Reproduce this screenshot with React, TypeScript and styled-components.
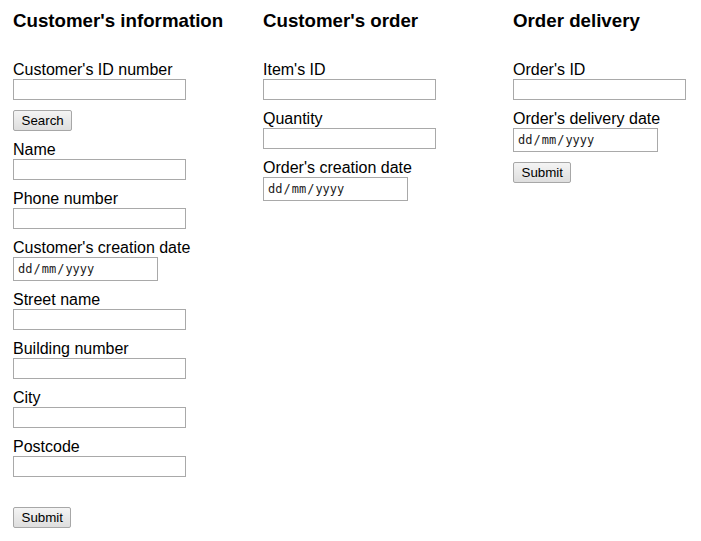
import React from "react";
import styled, { createGlobalStyle } from "styled-components";

const Global = createGlobalStyle`
  html, body { margin: 0; padding: 0; background: #fff; }
  body { font-family: "Liberation Sans", Arial, sans-serif; color: #000; }
`;

const Page = styled.div`
  display: grid;
  grid-template-columns: 250px 250px 1fr;
  align-items: start;
  padding: 10px 13px;
`;

const Column = styled.section`
  display: flex;
  flex-direction: column;
  align-items: flex-start;
  gap: 10px;
`;

const Heading = styled.h3`
  margin: 0 0 19px 0;
  font-size: 18.72px;
  font-weight: bold;
  line-height: 21.5px;
  white-space: nowrap;
`;

const Field = styled.div`
  display: flex;
  flex-direction: column;
  align-items: flex-start;
`;

const Label = styled.label`
  font-size: 16px;
  line-height: 18px;
  white-space: nowrap;
`;

const TextInput = styled.input`
  box-sizing: border-box;
  width: 173px;
  height: 21px;
  margin: 0;
  padding: 1px 2px;
  border: 1px solid #a9a9a9;
  background: #fff;
  font-family: "Liberation Sans", Arial, sans-serif;
  font-size: 13.33px;
`;

const DateBox = styled.div`
  box-sizing: border-box;
  width: 145px;
  height: 24px;
  border: 1px solid #a9a9a9;
  display: flex;
  align-items: center;
  padding-left: 4px;
  font-family: "DejaVu Sans Mono", "Liberation Mono", monospace;
  font-size: 12px;
  color: #1a1a1a;
  white-space: pre;
`;

const Sep = styled.span`
  margin: 0 1px;
`;

const Button = styled.button<{ $top?: number }>`
  box-sizing: border-box;
  height: 21px;
  margin: ${(p) => (p.$top ? `${p.$top}px` : "0")} 0 0 0;
  padding: 0 7.5px;
  border: 1px solid #a7a7a7;
  border-radius: 2px;
  background: linear-gradient(#f4f4f4, #dedede);
  font-family: "Liberation Sans", Arial, sans-serif;
  font-size: 13.33px;
  color: #000;
`;

const TextField = ({ label }: { label: string }) => (
  <Field>
    <Label>{label}</Label>
    <TextInput type="text" />
  </Field>
);

const DateField = ({ label }: { label: string }) => (
  <Field>
    <Label>{label}</Label>
    <DateBox>
      dd<Sep>/</Sep>mm<Sep>/</Sep>yyyy
    </DateBox>
  </Field>
);

export default function App() {
  return (
    <>
      <Global />
      <Page>
        <Column>
          <Heading>Customer's information</Heading>
          <TextField label="Customer's ID number" />
          <Button>Search</Button>
          <TextField label="Name" />
          <TextField label="Phone number" />
          <DateField label="Customer's creation date" />
          <TextField label="Street name" />
          <TextField label="Building number" />
          <TextField label="City" />
          <TextField label="Postcode" />
          <Button $top={20}>Submit</Button>
        </Column>
        <Column>
          <Heading>Customer's order</Heading>
          <TextField label="Item's ID" />
          <TextField label="Quantity" />
          <DateField label="Order's creation date" />
        </Column>
        <Column>
          <Heading>Order delivery</Heading>
          <TextField label="Order's ID" />
          <DateField label="Order's delivery date" />
          <Button>Submit</Button>
        </Column>
      </Page>
    </>
  );
}
